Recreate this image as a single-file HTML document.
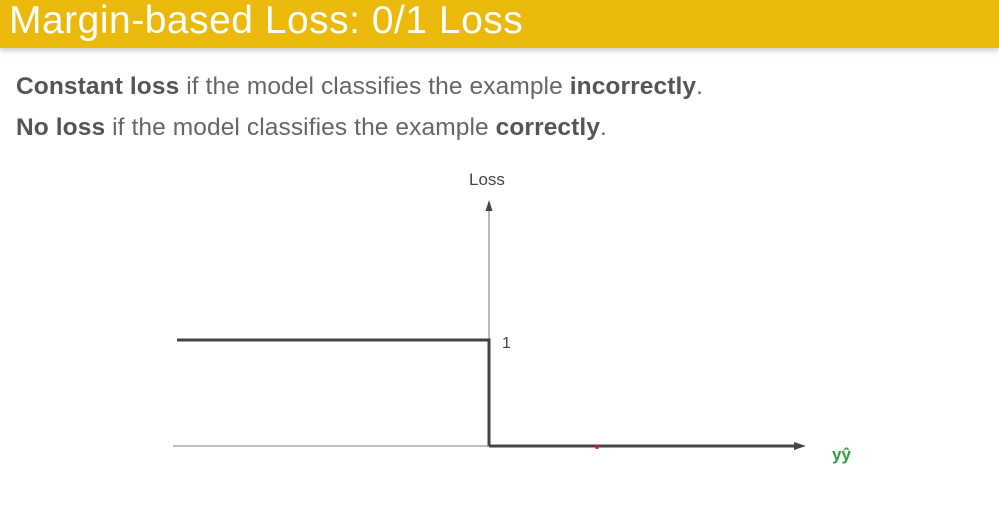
<!DOCTYPE html>
<html><head><style>
body{margin:0;width:999px;height:511px;background:#fff;overflow:hidden;font-family:"Liberation Sans",sans-serif;position:relative}
.hdr{position:absolute;left:0;top:0;width:999px;height:48px;background:#ebb90b;box-shadow:0 2px 6px rgba(0,0,0,.25)}
.hdr span{position:absolute;left:9px;top:-1px;font-size:39px;color:#fff;letter-spacing:0.5px;white-space:nowrap}
.t{position:absolute;left:16px;font-size:24.5px;color:#666;letter-spacing:0.1px;white-space:nowrap}
.t b{color:#555}
</style></head><body>
<div class="hdr"><span>Margin-based Loss: 0/1 Loss</span></div>
<div class="t" style="top:73px"><b>Constant loss</b> if the model classifies the example <b>incorrectly</b>.</div>
<div class="t" style="top:114px"><b>No loss</b> if the model classifies the example <b>correctly</b>.</div>
<svg width="999" height="511" style="position:absolute;left:0;top:0">
<line x1="489" y1="208" x2="489" y2="446" stroke="#777" stroke-width="1"/>
<polygon points="489,200 485.5,211 492.5,211" fill="#444"/>
<line x1="173" y1="446" x2="489" y2="446" stroke="#999" stroke-width="1.2"/>
<line x1="489" y1="446" x2="798" y2="446" stroke="#444" stroke-width="3"/>
<polygon points="806,446 794,442 794,450" fill="#444"/>
<polyline points="177,340 489,340 489,446" fill="none" stroke="#444" stroke-width="3"/>
<circle cx="597" cy="447" r="2" fill="#e0114a"/>
<text x="469" y="185" font-size="17" fill="#444" font-family="Liberation Sans">Loss</text>
<text x="502" y="348" font-size="16" fill="#444" font-family="Liberation Sans">1</text>
<text x="832" y="460" font-size="17" font-weight="bold" fill="#2f9e44" font-family="Liberation Sans">yŷ</text>
</svg>
</body></html>
